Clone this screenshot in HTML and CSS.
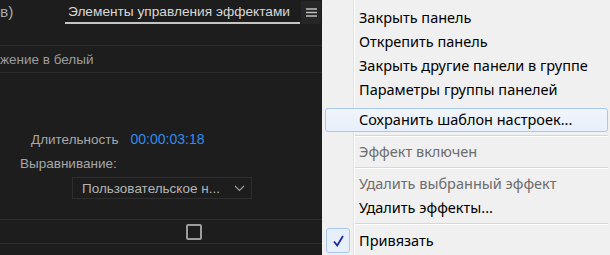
FILE: index.html
```html
<!DOCTYPE html>
<html lang="ru">
<head>
    <meta charset="UTF-8">
    <title>Элементы управления эффектами</title>
    <link rel="stylesheet" href="styles.css">
</head>
<body>
    <div class="panel">
        <div class="tabbar">
            <span class="tab-prev">в)</span>
            <span class="tab-active">Элементы управления эффектами</span>
            <span class="tab-menu">
                <svg width="11" height="9" viewBox="0 0 11 9"><path d="M0 1h11M0 4.5h11M0 8h11" stroke="#bdbdbd" stroke-width="1.4"/></svg>
            </span>
        </div>
        <div class="row-effect"><span>жение в белый</span></div>
        <div class="props">
            <div class="prop-duration">
                <span class="label">Длительность</span>
                <span class="timecode">00:00:03:18</span>
            </div>
            <div class="prop-align">Выравнивание:</div>
            <div class="select">
                <span>Пользовательское н...</span>
                <svg width="11" height="7" viewBox="0 0 11 7"><path d="M1 1l4.5 4.5L10 1" fill="none" stroke="#9a9a9a" stroke-width="1.2"/></svg>
            </div>
        </div>
        <div class="row-check"><span class="checkbox"></span></div>
    </div>
    <!-- Context menu -->
    <ul class="menu">
        <li>Закрыть панель</li>
        <li>Открепить панель</li>
        <li>Закрыть другие панели в группе</li>
        <li>Параметры группы панелей</li>
        <li class="sep-before hover">Сохранить шаблон настроек...</li>
        <li class="sep"></li>
        <li class="disabled">Эффект включен</li>
        <li class="sep"></li>
        <li class="disabled">Удалить выбранный эффект</li>
        <li>Удалить эффекты...</li>
        <li class="sep"></li>
        <li class="checked">
            <span class="check">
                <svg width="11" height="12" viewBox="0 0 11 12"><path d="M1 6.5l3.2 4L10 1" fill="none" stroke="#1d2a9e" stroke-width="1.8"/></svg>
            </span>Привязать
        </li>
    </ul>
</body>
</html>
```

FILE: styles.css
```css
body {
    margin: 0;
    width: 610px;
    height: 255px;
    overflow: hidden;
    display: flex;
    background: #1d1d1d;
}

/* Left dark panel */
.panel {
    width: 322px;
    flex: none;
    font-family: "Liberation Sans", sans-serif;
    font-size: 13.5px;
    color: #a8a8a8;
    overflow: hidden;
}

.tabbar {
    height: 46px;
    display: flex;
    align-items: flex-start;
    border-bottom: 1px solid #2c2c2c;
    box-sizing: border-box;
}

.tab-prev {
    padding-top: 3px;
    width: 65px;
    font-size: 15.5px;
}

.tab-active {
    color: #d8d8d8;
    font-size: 13.7px;
    padding: 4px 0 3px 3px;
    width: 232px;
    border-bottom: 2px solid #c4c4c4;
    white-space: nowrap;
}

.tab-menu {
    width: 20px;
    height: 23px;
    margin-left: 1px;
    margin-top: 1px;
    background: #262626;
    border-radius: 2px;
    display: flex;
    align-items: center;
    justify-content: center;
}

.row-effect {
    height: 26px;
    line-height: 27px;
    border-bottom: 1px solid #2c2c2c;
    color: #9c9c9c;
}

.props {
    height: 147px;
    border-bottom: 1px solid #2c2c2c;
    box-sizing: border-box;
    padding-top: 54px;
}

.prop-duration {
    display: flex;
    gap: 12px;
    padding-left: 31px;
    height: 24px;
    align-items: center;
}

.timecode {
    color: #2f8cf0;
    font-size: 14px;
}

.prop-align {
    padding-left: 20px;
    height: 26px;
    line-height: 26px;
}

.select {
    margin-left: 72px;
    width: 180px;
    height: 22px;
    border: 1px solid #2e2e2e;
    box-sizing: border-box;
    display: flex;
    align-items: center;
    justify-content: space-between;
    padding: 0 6px 0 9px;
    color: #b4b4b4;
}

.row-check {
    height: 23px;
    border-bottom: 1px solid #2c2c2c;
    display: flex;
    align-items: center;
    padding-left: 186px;
}

.checkbox {
    width: 12px;
    height: 12px;
    border: 2px solid #9c9c9c;
    border-radius: 2px;
}

/* Context menu */
.menu {
    flex: 1;
    margin: 0;
    padding: 6px 0 0 3px;
    list-style: none;
    background: #f0f0f0;
    font-family: "Noto Sans", sans-serif;
    font-size: 14.5px;
    color: #000;
    position: relative;
}

.menu::before {
    content: "";
    position: absolute;
    left: 31px;
    top: 0;
    bottom: 0;
    border-left: 1px solid #e2e2e2;
    border-right: 1px solid #fff;
}

.menu li {
    height: 24px;
    line-height: 23px;
    padding-left: 34px;
    position: relative;
    margin-right: 2px;
}

.menu li.sep {
    height: 8px;
    margin-left: 30px;
    padding: 0;
}

.menu li.sep::after {
    content: "";
    position: absolute;
    left: 0;
    right: 0;
    top: 3px;
    border-top: 1px solid #d7d7d7;
    border-bottom: 1px solid #fff;
}

.menu li.sep-before {
    margin-top: 6px;
}

.menu li.hover {
    background: linear-gradient(#f1f5fb, #e6effa);
    border: 1px solid #a9c8ee;
    border-radius: 3px;
    box-sizing: border-box;
    padding-left: 33px;
    line-height: 21px;
}

.menu li.disabled {
    color: #6d6d6d;
}

.menu li.checked {
    line-height: 25px;
}

.menu li .check {
    position: absolute;
    left: 1px;
    top: 0;
    width: 22px;
    height: 23px;
    border: 1px solid #a9c8ee;
    border-radius: 3px;
    background: #e6effa;
    display: flex;
    align-items: center;
    justify-content: center;
}
```
